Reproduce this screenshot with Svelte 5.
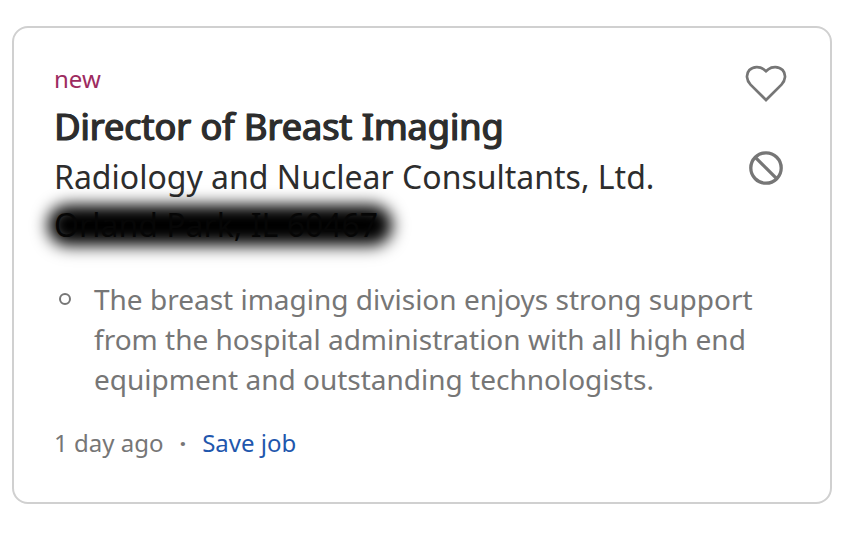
<script lang="ts">
	const job = {
		title: 'Director of Breast Imaging',
		company: 'Radiology and Nuclear Consultants, Ltd.',
		location: 'Orland Park, IL 60467',
		points: [
			'The breast imaging division enjoys strong support from the hospital administration with all high end equipment and outstanding technologists.'
		],
		posted: '1 day ago'
	};

	let saved = $state(false);
	let hidden = $state(false);
</script>

<article class="card">
	<div class="top">
		<div class="info">
			<span class="new">new</span>
			<h2>{job.title}</h2>
			<p class="company">{job.company}</p>
			<p class="location"><span>{job.location}</span></p>
		</div>
		<div class="actions">
			<button type="button" aria-label="Save job" aria-pressed={saved} onclick={() => (saved = !saved)}>
				<svg width="44" height="44" viewBox="0 1 44 44">
					<path d="M22 38 6.500 22.600C2.300 18.300 1.800 12 5.400 8C9.300 4.100 16 4.300 19.600 7.200L22 9.300L24.400 7.200C28 4.300 34.700 4.100 38.600 8C42.200 12 41.700 18.300 37.500 22.600Z" />
				</svg>
			</button>
			<button type="button" aria-label="Not interested" aria-pressed={hidden} onclick={() => (hidden = !hidden)}>
				<svg class="block" width="44" height="44" viewBox="0 1 44 44">
					<circle cx="22" cy="22" r="15.2" />
					<path d="M11.300 11.300 32.700 32.700" />
				</svg>
			</button>
		</div>
	</div>
	<ul>
		{#each job.points as point}
			<li>{point}</li>
		{/each}
	</ul>
	<div class="footer">
		<span>{job.posted}</span>
		<span class="dot">·</span>
		<a href="#save">Save job</a>
	</div>
</article>

<style>
	:global(body) { background: #fff; font-family: "Noto Sans", sans-serif; }
	.card { margin: 26px 10px 26px 12px; padding: 35px 40px 43px; border: 2px solid #d0d0d0; border-radius: 16px; color: #2d2d2d; }
	.top { display: flex; justify-content: space-between; }
	.new { display: block; font-size: 24px; line-height: 32px; color: #9d2b60; }
	h2 { margin: 6px 0 0; font-size: 36px; line-height: 52px; font-weight: 400; -webkit-text-stroke: 1px currentColor; text-shadow: 1px 0 currentColor; }
	p { margin: 0; font-size: 32px; line-height: 48px; }
	.location { color: #060606; }
	.location span { position: relative; z-index: 0; }
	/* blurred bar over the address */
	.location span::before { content: ""; position: absolute; z-index: -1; inset: 2px -14px 1px -6px; border-radius: 20px; background: #000; box-shadow: 0 2px 12px rgba(0, 0, 0, 0.2); filter: blur(8px); }
	.actions { display: flex; flex-direction: column; gap: 40px; padding-right: 2px; }
	button { display: block; width: 44px; height: 44px; padding: 0; border: 0; background: none; cursor: pointer; }
	svg { display: block; fill: none; stroke: #767676; stroke-width: 2.700; }
	.block { stroke-width: 3.300; }
	ul { margin: 30px 0 0; padding: 0; list-style: none; font-size: 28px; line-height: 40px; color: #767676; }
	li { display: flex; }
	li::before { content: ""; flex: none; box-sizing: border-box; width: 12px; height: 12px; margin: 14px 23px 0 5px; border: 2px solid #767676; border-radius: 50%; }
	.footer { display: flex; gap: 16px; margin-top: 28px; font-size: 24px; line-height: 32px; color: #767676; }
	.dot { font-weight: 700; }
	a { color: #1f57ad; text-decoration: none; }
	a:hover { text-decoration: underline; }
</style>
